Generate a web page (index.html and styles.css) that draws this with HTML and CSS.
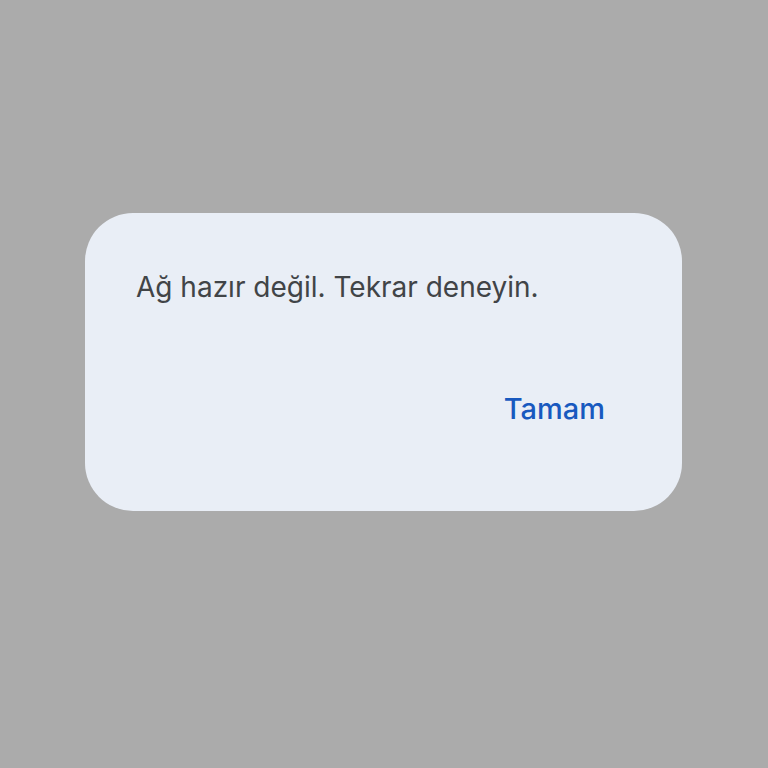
FILE: index.html
```html
<!DOCTYPE html>
<html lang="tr">
<head>
<meta charset="utf-8">
<link rel="stylesheet" href="styles.css">
</head>
<body>
<div class="screen">
  <div class="dialog">
    <p class="message">Ağ hazır değil. Tekrar deneyin.</p>
    <div class="actions">
      <span class="button">Tamam</span>
    </div>
  </div>
</div>
</body>
</html>
```
FILE: styles.css
```css
html, body {
  margin: 0;
  padding: 0;
}
body {
  background: #ababab;
  font-family: Inter, Roboto, sans-serif;
}
.screen {
  width: 768px;
  height: 768px;
  display: flex;
  flex-direction: column;
  align-items: flex-start;
  padding-top: 213px;
  padding-left: 85px;
  box-sizing: border-box;
}
.dialog {
  width: 597px;
  height: 298px;
  background: #e9eef6;
  border-radius: 48px;
  box-sizing: border-box;
  padding: 0 77px 0 51px;
  display: flex;
  flex-direction: column;
}
.message {
  margin: 59px 0 0 0;
  font-size: 28px;
  line-height: 30px;
  color: #414447;
}
.actions {
  display: flex;
  justify-content: flex-end;
  margin-top: 92px;
}
.button {
  font-size: 29px;
  line-height: 30px;
  font-weight: 500;
  color: #1859bf;
}
```
